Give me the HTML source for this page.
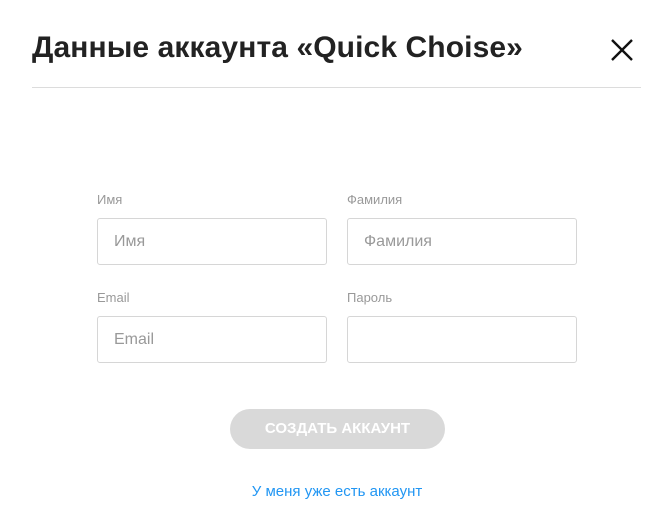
<!DOCTYPE html>
<html><head><meta charset="utf-8"><style>
body{margin:0;width:671px;height:532px;background:#fff;font-family:"Liberation Sans",sans-serif;position:relative;overflow:hidden}
.t{position:absolute;left:32px;top:31px;font-size:30px;font-weight:bold;color:#222;white-space:nowrap;letter-spacing:0.1px}
.hr{position:absolute;left:32px;top:87px;width:609px;height:1px;background:#dcdcdc}
.x{position:absolute;left:610px;top:38px}
.l{position:absolute;font-size:13px;color:#999}
.i{position:absolute;width:228px;height:45px;border:1px solid #d6d6d6;border-radius:3px;box-sizing:content-box}
.i span{position:absolute;left:16px;top:14px;font-size:16px;color:#999}
.b{position:absolute;left:230px;top:409px;width:215px;height:40px;border-radius:20px;background:#d9d9d9;color:#fff;font-weight:bold;font-size:15px;text-align:center;line-height:40px}
.a{position:absolute;left:0;width:674px;text-align:center;top:483px;font-size:15px;color:#2196f3}
</style></head><body>
<div class="t">Данные аккаунта «Quick Choise»</div>
<svg class="x" width="24" height="24" viewBox="0 0 24 24"><path d="M2 2L22 22M22 2L2 22" stroke="#111" stroke-width="2.4"/></svg>
<div class="hr"></div>
<div class="l" style="left:97px;top:192px">Имя</div>
<div class="l" style="left:347px;top:192px">Фамилия</div>
<div class="i" style="left:97px;top:218px"><span>Имя</span></div>
<div class="i" style="left:347px;top:218px"><span>Фамилия</span></div>
<div class="l" style="left:97px;top:290px">Email</div>
<div class="l" style="left:347px;top:290px">Пароль</div>
<div class="i" style="left:97px;top:316px"><span>Email</span></div>
<div class="i" style="left:347px;top:316px"></div>
<div class="b">СОЗДАТЬ АККАУНТ</div>
<div class="a">У меня уже есть аккаунт</div>
</body></html>
